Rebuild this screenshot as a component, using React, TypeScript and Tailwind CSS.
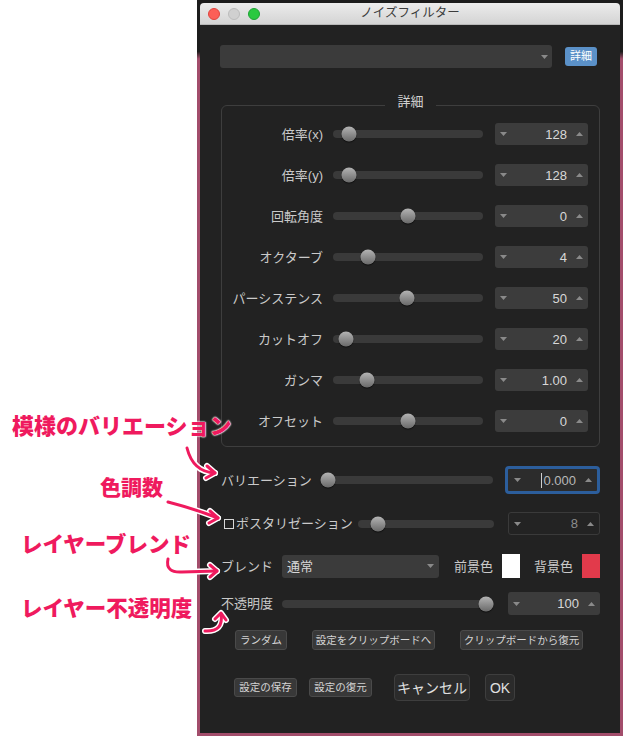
import React from 'react';

const FONT = '"Liberation Sans", "Noto Sans CJK JP", sans-serif';

const rows = [
  { label: '倍率(x)', pos: 16, value: '128' },
  { label: '倍率(y)', pos: 16, value: '128' },
  { label: '回転角度', pos: 75, value: '0' },
  { label: 'オクターブ', pos: 35, value: '4' },
  { label: 'パーシステンス', pos: 74, value: '50' },
  { label: 'カットオフ', pos: 13, value: '20' },
  { label: 'ガンマ', pos: 34, value: '1.00' },
  { label: 'オフセット', pos: 75, value: '0' },
];

const Down = ({ color = '#8a8a8a' }: { color?: string }) => (
  <svg width="7" height="4" viewBox="0 0 7 4" className="shrink-0">
    <path d="M0 0h7L3.5 4z" fill={color} />
  </svg>
);

const Up = ({ color = '#8a8a8a' }: { color?: string }) => (
  <svg width="7" height="4" viewBox="0 0 7 4" className="shrink-0">
    <path d="M0 4h7L3.5 0z" fill={color} />
  </svg>
);

// Track with a round thumb; pos is the thumb centre in px from the track's left
const Slider = ({ pos, className = '' }: { pos: number | string; className?: string }) => (
  <div className={`relative h-[8px] rounded-full bg-[#3a3a3a] ${className}`}>
    <span
      className="absolute top-1/2 h-[15px] w-[15px] -translate-x-1/2 -translate-y-1/2 rounded-full bg-linear-to-b from-[#b4b4b4] to-[#6a6a6a] shadow-[0_1px_1px_rgba(0,0,0,0.6)]"
      style={{ left: pos }}
    />
  </div>
);

const SpinBox = ({ value, className = '' }: { value: string; className?: string }) => (
  <div className={`flex h-[22px] shrink-0 items-center rounded-[3px] bg-[#3c3c3c] px-[5px] ${className}`}>
    <Down />
    <span className="flex-1 pr-[9px] text-right text-[13px] leading-none text-[#d8d8d8]">{value}</span>
    <Up />
  </div>
);

const Label = ({ children, className = '' }: { children: React.ReactNode; className?: string }) => (
  <div className={`shrink-0 whitespace-nowrap text-[13px] leading-none text-[#cacaca] ${className}`}>{children}</div>
);

const Btn = ({ children, className = '' }: { children: React.ReactNode; className?: string }) => (
  <div
    className={`flex shrink-0 items-center justify-center whitespace-nowrap rounded-[3px] border border-[#4a4a4a] bg-[#383838] text-[10.5px] leading-none text-[#d4d4d4] ${className}`}
  >
    {children}
  </div>
);

const BigBtn = ({ children, className = '' }: { children: React.ReactNode; className?: string }) => (
  <div
    className={`flex h-[27px] shrink-0 items-center justify-center whitespace-nowrap rounded-[4px] border border-[#3e3e3e] bg-[#2b2b2b] text-[14px] leading-none text-[#e0e0e0] ${className}`}
  >
    {children}
  </div>
);

const Note = ({ children, className = '' }: { children: React.ReactNode; className?: string }) => (
  <div
    className={`absolute whitespace-nowrap font-black leading-none text-[#ef1a5e] [text-shadow:0_0_2px_#fff,0_0_2px_#fff,0_0_1px_#fff] ${className}`}
  >
    {children}
  </div>
);

const arrows = [
  'M187 448 Q193 472 215 473',
  'M207 466 L215 473 L206 478',
  'M168 502 Q195 509 218 518',
  'M210 511 L218 518 L209 523',
  'M168 559 Q165 573 182 572 L217 571',
  'M210 565 L217 571 L210 577',
  'M205 631 Q224 632 221 614',
  'M215 619 L221 613 L226 620',
];

export default function App() {
  return (
    <div className="relative h-[736px] w-[634px] overflow-hidden bg-white" style={{ fontFamily: FONT }}>
      {/* Window */}
      <div className="ml-[197px] flex h-[736px] w-[426px] flex-col bg-linear-to-b from-[#1c1c1c] from-7% to-[#a24d6b] to-8% px-[3px] pb-[3px] pt-[3px]">
        {/* Title bar */}
        <div className="grid h-[22px] shrink-0 grid-cols-[1fr_auto_1fr] items-center rounded-t-[4px] border-b border-[#b8b8b8] bg-linear-to-b from-[#ececec] to-[#d4d4d4] px-[8px]">
          <div className="flex gap-[8px]">
            <span className="h-[12px] w-[12px] rounded-full border border-[#e0443e] bg-[#fc5f57]" />
            <span className="h-[12px] w-[12px] rounded-full border border-[#bcbcbc] bg-[#d0d0d0]" />
            <span className="h-[12px] w-[12px] rounded-full border border-[#1ea334] bg-[#2ac940]" />
          </div>
          <div className="text-[12.5px] text-[#3c3c3c]">ノイズフィルター</div>
          <div />
        </div>

        {/* Body */}
        <div className="flex flex-1 flex-col bg-[#222222] pl-[21px] pr-[20px]">
          {/* Preset */}
          <div className="mt-[20px] flex items-center">
            <div className="-ml-[1px] flex h-[23px] w-[332px] items-center justify-end rounded-[3px] bg-[#3b3b3b] pr-[4px]">
              <Down />
            </div>
            <div className="ml-[13px] flex h-[19px] w-[32px] items-center justify-center rounded-[3px] bg-[#5b91c8] text-[11px] leading-none text-white">
              詳細
            </div>
          </div>

          {/* Details group */}
          <fieldset className="mt-[27px] rounded-[6px] border border-[#3e3e3e] pb-[14px] pt-[7px]">
            <legend className="mx-auto px-[12px] pb-[8px] text-[13px] leading-none text-[#d2d2d2]">詳細</legend>
            <div className="flex flex-col gap-[19px]">
              {rows.map((r) => (
                <div key={r.label} className="flex items-center">
                  <Label className="w-[101px] text-right">{r.label}</Label>
                  <Slider pos={r.pos} className="ml-[10px] w-[150px]" />
                  <SpinBox value={r.value} className="ml-[12px] w-[93px]" />
                </div>
              ))}
            </div>
          </fieldset>

          {/* Variation */}
          <div className="mt-[19px] flex h-[28px] items-center">
            <Label>バリエーション</Label>
            <Slider pos={7} className="ml-[9px] flex-1" />
            <div className="ml-[12px] flex h-[28px] w-[95px] shrink-0 items-center rounded-[4px] border-[3px] border-[#2c5e9c] bg-[#2c2c2c] pl-[6px] pr-[5px]">
              <Down />
              <span className="flex flex-1 items-center justify-end pr-[9px] text-[13px] leading-none text-[#b8b8b8]">
                <span className="mr-px h-[15px] w-px bg-[#cfcfcf]" />
                0.000
              </span>
              <Up />
            </div>
          </div>

          {/* Posterization */}
          <div className="mt-[18px] flex h-[23px] items-center">
            <span className="ml-[3px] h-[10px] w-[10px] shrink-0 border border-[#d8d8d8]" />
            <Label className="ml-[2px]">ポスタリゼーション</Label>
            <Slider pos={20} className="ml-[5px] flex-1" />
            <div className="ml-[14px] flex h-[23px] w-[92px] shrink-0 items-center rounded-[3px] border border-[#3a3a3a] bg-[#232323] px-[5px]">
              <Down />
              <span className="flex-1 pr-[9px] text-right text-[13px] leading-none text-[#8c8c8c]">8</span>
              <Up />
            </div>
          </div>

          {/* Blend */}
          <div className="mt-[19px] flex h-[24px] items-center">
            <Label>ブレンド</Label>
            <div className="ml-[9px] flex h-[23px] flex-1 items-center rounded-[3px] bg-[#3b3b3b] pl-[5px] pr-[5px]">
              <span className="flex-1 text-[13px] leading-none text-[#d8d8d8]">通常</span>
              <Down />
            </div>
            <Label className="ml-[15px]">前景色</Label>
            <span className="ml-[9px] h-[24px] w-[18px] shrink-0 bg-white" />
            <Label className="ml-[14px]">背景色</Label>
            <span className="ml-[9px] h-[24px] w-[18px] shrink-0 bg-[#e23a4b]" />
          </div>

          {/* Opacity */}
          <div className="mt-[14px] flex h-[23px] items-center">
            <Label>不透明度</Label>
            <Slider pos="calc(100% - 8px)" className="ml-[9px] flex-1" />
            <SpinBox value="100" className="ml-[14px] h-[23px] w-[92px]" />
          </div>

          {/* Utility buttons */}
          <div className="mt-[15px] flex items-center">
            <Btn className="ml-[14px] h-[20px] w-[52px]">ランダム</Btn>
            <Btn className="ml-[25px] h-[20px] w-[123px]">設定をクリップボードへ</Btn>
            <Btn className="ml-[25px] h-[20px] w-[123px]">クリップボードから復元</Btn>
          </div>

          {/* Dialog buttons */}
          <div className="mt-[24px] flex items-center">
            <Btn className="ml-[13px] h-[19px] w-[63px]">設定の保存</Btn>
            <Btn className="ml-[12px] h-[19px] w-[63px]">設定の復元</Btn>
            <BigBtn className="ml-[22px] w-[76px]">キャンセル</BigBtn>
            <BigBtn className="ml-[15px] w-[30px]">OK</BigBtn>
          </div>
        </div>
      </div>

      {/* Annotations */}
      <Note className="left-[12px] top-[416px] text-[22px]">模様のバリエーション</Note>
      <Note className="left-[100px] top-[477px] text-[21px]">色調数</Note>
      <Note className="left-[21px] top-[535px] text-[21.5px]">レイヤーブレンド</Note>
      <Note className="left-[21px] top-[599px] text-[21.5px]">レイヤー不透明度</Note>

      <svg className="pointer-events-none absolute left-0 top-0" width="634" height="736" viewBox="0 0 634 736" fill="none">
        <g stroke="#fff" strokeWidth="6" strokeLinecap="round" strokeLinejoin="round">
          {arrows.map((d) => (
            <path key={d} d={d} />
          ))}
        </g>
        <g stroke="#ef1a5e" strokeWidth="3" strokeLinecap="round" strokeLinejoin="round">
          {arrows.map((d) => (
            <path key={d} d={d} />
          ))}
        </g>
      </svg>
    </div>
  );
}
